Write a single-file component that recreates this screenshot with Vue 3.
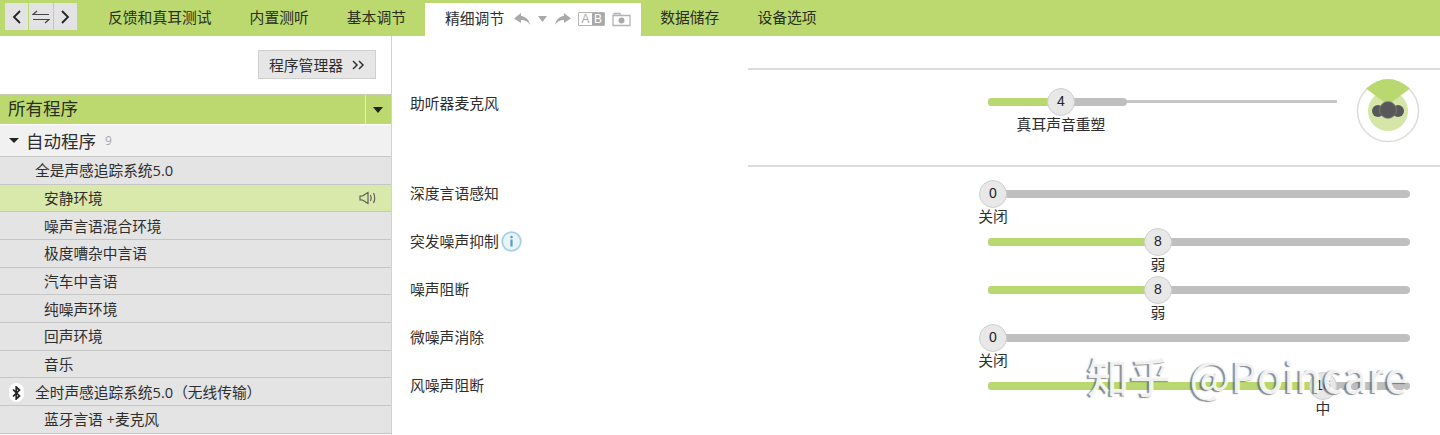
<template>
  <div class="app">
    <nav class="topbar">
      <div class="history">
        <button type="button" class="history__btn">
          <svg width="12" height="16" viewBox="0 0 12 16"><path d="M9 2 3 8l6 6" class="stroke-dark" /></svg>
        </button>
        <button type="button" class="history__btn">
          <svg width="18" height="14" viewBox="0 0 18 14"><path d="M5 1 1 4.500h16M13 13l4-3.500H1" class="stroke-thin" /></svg>
        </button>
        <button type="button" class="history__btn">
          <svg width="12" height="16" viewBox="0 0 12 16"><path d="m3 2 6 6-6 6" class="stroke-dark" /></svg>
        </button>
      </div>
      <a class="tab">反馈和真耳测试</a>
      <a class="tab">内置测听</a>
      <a class="tab">基本调节</a>
      <div class="tab tab--active">
        <span>精细调节</span>
        <div class="tools">
          <svg width="17" height="14" viewBox="0 0 17 14"><path d="M7 1 0 6.500 7 11V8c4 0 7 1.500 9 5-1-5-4-8.500-9-9z" fill="#a9a9a9" /></svg>
          <svg width="9" height="6" viewBox="0 0 9 6"><path d="M0 0h9L4.500 6z" fill="#a9a9a9" /></svg>
          <svg width="17" height="14" viewBox="0 0 17 14"><path d="m10 1 7 5.500L10 11V8c-4 0-7 1.500-9 5 1-5 4-8.500 9-9z" fill="#a9a9a9" /></svg>
          <span class="tools__ab"><i>A</i><b>B</b></span>
          <svg width="19" height="15" viewBox="0 0 19 15">
            <path d="M1 3.500h17v10H1zM2 3.500V1.500h6v2" fill="none" stroke="#b4b4b4" stroke-width="1.300" />
            <circle cx="9.500" cy="8.500" r="3" fill="#a9a9a9" />
          </svg>
        </div>
      </div>
      <a class="tab">数据储存</a>
      <a class="tab">设备选项</a>
    </nav>

    <div class="main">
      <aside class="sidebar">
        <div class="sidebar__top">
          <button type="button" class="manager-btn">
            <span>程序管理器</span>
            <svg width="13" height="10" viewBox="0 0 13 10"><path d="m1 1 4 4-4 4M7 1l4 4-4 4" fill="none" stroke="#333" stroke-width="1.500" /></svg>
          </button>
        </div>
        <div class="select">
          <span class="select__text">所有程序</span>
          <span class="select__arrow"></span>
        </div>
        <div class="group">
          <span class="group__arrow"></span>
          <span class="group__title">自动程序</span>
          <span class="group__count">9</span>
        </div>
        <div
          v-for="item in programs"
          :key="item.name"
          class="program"
          :class="{ 'program--sub': item.sub, 'program--active': item.active }"
        >
          <span v-if="item.bt" class="program__bt">
            <svg width="9" height="14" viewBox="0 0 9 14"><path d="M1 3.500 7.500 10 4.200 13V1l3.300 3L1 10.500" fill="none" stroke="#222" stroke-width="1.700" /></svg>
          </span>
          <span>{{ item.name }}</span>
          <svg v-if="item.active" class="program__sound" width="18" height="14" viewBox="0 0 18 14">
            <path d="M1 5v4h2.500L9 12.500v-11L3.500 5z" fill="none" stroke="#555" stroke-width="1.100" />
            <path d="M11.500 4q1.500 3 0 6M14.500 2q2.500 5 0 10" fill="none" stroke="#555" stroke-width="1.100" />
          </svg>
        </div>
      </aside>

      <section class="content">
        <hr class="divider" />
        <div class="mic">
          <span class="mic__label">助听器麦克风</span>
          <div class="mic__slider">
            <div class="slider__line"></div>
            <div class="slider__track mic__track">
              <div class="slider__fill" style="width: 73px"></div>
            </div>
            <div class="slider__thumb" style="left: 73px">4</div>
            <div class="slider__caption" style="left: 73px">真耳声音重塑</div>
          </div>
          <svg class="mic__polar" width="66" height="66" viewBox="0 0 66 66">
            <circle cx="33" cy="34" r="30.500" fill="#fff" stroke="#dcdcdc" stroke-width="1.500" />
            <circle cx="33" cy="34" r="20" fill="#d6e6a8" />
            <path d="M33 28 11 11.500Q33-7.500 55 11.500z" fill="#b9d86f" />
            <circle cx="23" cy="34" r="6" fill="#57575a" />
            <circle cx="43" cy="34" r="6" fill="#57575a" />
            <circle cx="33" cy="33" r="8.500" fill="#57575a" stroke="#8a8a8a" stroke-width=".6" />
          </svg>
        </div>
        <hr class="divider" />
        <div class="rows">
          <div v-for="row in rows" :key="row.label" class="row">
            <div class="row__label">
              <span>{{ row.label }}</span>
              <svg v-if="row.info" width="21" height="21" viewBox="0 0 21 21">
                <circle cx="10.500" cy="10.500" r="9.300" fill="#e9f3fa" stroke="#a9cfe6" stroke-width="1.800" />
                <circle cx="10.500" cy="6" r="1.300" fill="#5b9ac4" />
                <path d="M10.500 8.500v7" stroke="#5b9ac4" stroke-width="2.200" />
              </svg>
            </div>
            <div class="slider">
              <div class="slider__track">
                <div class="slider__fill" :style="{ width: thumbX(row.value) + 'px' }"></div>
              </div>
              <div class="slider__thumb" :style="{ left: thumbX(row.value) + 'px' }">{{ row.value }}</div>
              <div class="slider__caption" :style="{ left: thumbX(row.value) + 'px' }">{{ row.caption }}</div>
            </div>
          </div>
        </div>
      </section>
    </div>

    <div class="watermark">知乎 @Poincare</div>
  </div>
</template>

<script setup>
 const programs = [
   { name: '全是声感追踪系统5.0', sub: true },
   { name: '安静环境', active: true },
   { name: '噪声言语混合环境' },
   { name: '极度嘈杂中言语' },
   { name: '汽车中言语' },
   { name: '纯噪声环境' },
   { name: '回声环境' },
   { name: '音乐' },
   { name: '全时声感追踪系统5.0（无线传输）', sub: true, bt: true },
   { name: '蓝牙言语 +麦克风' }
 ]

 const rows = [
   { label: '深度言语感知', value: 0, caption: '关闭' },
   { label: '突发噪声抑制', value: 8, caption: '弱', info: true },
   { label: '噪声阻断', value: 8, caption: '弱' },
   { label: '微噪声消除', value: 0, caption: '关闭' },
   { label: '风噪声阻断', value: 16, caption: '中' }
 ]

 function thumbX(value) {
   return 5 + value * 20.625
 }
</script>

<style scoped>
.app {
  position: relative;
  display: flex;
  flex-direction: column;
  width: 1440px;
  height: 435px;
  overflow: hidden;
  background: #fff;
  color: #2e2e2e;
  font-family: "Open Sans", "Noto Sans CJK SC", sans-serif;
  font-size: 14.800px;
  line-height: 20px;
}

.stroke-dark {
  fill: none;
  stroke: #222;
  stroke-width: 1.800;
}

.stroke-thin {
  fill: none;
  stroke: #444;
  stroke-width: 1.200;
}

.topbar {
  display: flex;
  flex: none;
  height: 36px;
  background: #bcd970;
}

.history {
  display: flex;
  gap: 1px;
  height: 27px;
  margin: 3px 12px 0 5px;
}

.history__btn {
  display: flex;
  align-items: center;
  justify-content: center;
  width: 23.330px;
  padding: 0;
  border: none;
  background: #e3e3e3;
}

.tab {
  display: flex;
  align-items: center;
  padding: 0 19px 2px;
  color: #2a2e1c;
}

.tab--active {
  gap: 10px;
  height: 33px;
  margin: 3px 0 0;
  padding: 0 10px 0 20px;
  box-sizing: border-box;
  background: #fff;
  color: #2e2e2e;
}

.tab--active > span {
  margin-bottom: 3px;
}

.tools {
  display: flex;
  align-items: center;
  gap: 7px;
  margin-bottom: 1px;
}

.tools__ab {
  display: flex;
  width: 27px;
  height: 14px;
  border: 1px solid #b4b4b4;
  box-sizing: border-box;
  border-radius: 1px;
  font-family: "Liberation Sans", sans-serif;
  font-size: 12px;
  line-height: 12px;
  text-align: center;
}

.tools__ab i {
  flex: 1;
  color: #a9a9a9;
  font-style: normal;
}

.tools__ab b {
  flex: 1;
  background: #a9a9a9;
  color: #fff;
  font-weight: 400;
}

.main {
  display: flex;
  flex: 1;
  min-height: 0;
}

.sidebar {
  flex: none;
  width: 392px;
  box-sizing: border-box;
  border-right: 1px solid #d2d2d2;
}

.sidebar__top {
  display: flex;
  justify-content: flex-end;
  height: 58px;
  padding: 14px 15px 0 0;
  box-sizing: border-box;
}

.manager-btn {
  display: flex;
  align-items: center;
  justify-content: center;
  gap: 9px;
  width: 118px;
  height: 29px;
  padding: 0;
  border: 1px solid #d0d0d0;
  background: #e6e6e6;
  color: #2e2e2e;
  font: inherit;
}

.select {
  display: flex;
  align-items: center;
  justify-content: space-between;
  height: 30px;
  background: #bcd970;
  border-top: 1px solid #c9c9b4;
  box-sizing: border-box;
}

.select__text {
  margin-bottom: 4px;
  padding-left: 8px;
  font-size: 17.500px;
  color: #2a2e1c;
}

.select__arrow {
  position: relative;
  width: 25px;
  height: 100%;
  border-left: 1px solid #e4efc4;
}

.select__arrow::after {
  content: '';
  position: absolute;
  left: 7px;
  top: 12px;
  border: 5px solid transparent;
  border-top: 6px solid #222;
  border-bottom: 0;
}

.group {
  display: flex;
  align-items: center;
  height: 32px;
  margin-top: 1px;
  background: #f1f1f1;
  border-bottom: 1px solid #c9c9c9;
  box-sizing: border-box;
}

.group__arrow {
  margin-left: 9px;
  border: 5px solid transparent;
  border-top: 5px solid #222;
  border-bottom: 0;
}

.group__title {
  margin-left: 7px;
  font-size: 17.500px;
}

.group__count {
  margin-left: 9px;
  color: #aaa;
  font-size: 12px;
}

.program {
  display: flex;
  align-items: center;
  height: 27.670px;
  padding-left: 44px;
  box-sizing: border-box;
  background: #e4e4e4;
  border-bottom: 1px solid #c6c6c6;
  font-size: 14.700px;
}

.program--sub {
  position: relative;
  padding-left: 35px;
}

.program--active {
  background: #d9e8ab;
  justify-content: space-between;
  padding-right: 14px;
}

.program__sound {
  flex: none;
}

.program__bt {
  position: absolute;
  left: 9px;
  top: 5px;
  display: flex;
  align-items: center;
  justify-content: center;
  width: 15px;
  height: 19px;
  border-radius: 8px;
  background: #fff;
}

.content {
  flex: 1;
  min-width: 0;
  padding-left: 18px;
}

.divider {
  height: 2px;
  margin: 0 0 0 338px;
  border: none;
  background: #dcdcdc;
}

.content > .divider:first-child {
  margin-top: 32px;
}

.mic {
  display: flex;
  height: 95px;
}

.mic__label {
  width: 578px;
  margin-top: 23px;
}

.mic__slider {
  position: relative;
  flex: none;
  width: 349px;
  height: 28px;
  margin-top: 18px;
}

.slider__line {
  position: absolute;
  left: 0;
  right: 0;
  top: 12px;
  height: 3px;
  background: #c6c6c6;
}

.mic__track {
  width: 139px;
}

.mic__polar {
  flex: none;
  margin: 7px 0 0 18px;
}

.rows {
  margin-top: 13px;
}

.row {
  display: flex;
  height: 48px;
}

.row__label {
  display: flex;
  align-items: center;
  gap: 2px;
  width: 578px;
  height: 26px;
  flex: none;
}

.slider {
  position: relative;
  width: 422px;
  height: 28px;
}

.slider__track {
  position: absolute;
  left: 0;
  top: 10px;
  width: 100%;
  height: 8px;
  border-radius: 4px;
  background: #bfbfbf;
  overflow: hidden;
}

.mic__slider .slider__track {
  width: 139px;
}

.slider__fill {
  height: 100%;
  background: #b9d86f;
}

.slider__thumb {
  position: absolute;
  top: 0;
  width: 28px;
  height: 28px;
  margin-left: -14px;
  box-sizing: border-box;
  border: 1.500px solid #cfcfcf;
  border-radius: 50%;
  background: #e8e8e8;
  font-family: "Liberation Sans", sans-serif;
  font-size: 14px;
  line-height: 25px;
  text-align: center;
  color: #222;
}

.slider__caption {
  position: absolute;
  top: 28px;
  line-height: 16px;
  transform: translateX(-50%);
  white-space: nowrap;
}

.watermark {
  position: absolute;
  left: 1087px;
  top: 345px;
  color: rgba(255, 255, 255, 0.88);
  font-family: "Noto Sans CJK SC", sans-serif;
  font-size: 42.500px;
  font-weight: 500;
  line-height: 60px;
  word-spacing: 8px;
  white-space: nowrap;
  text-shadow: -2px 1px 1px rgba(90, 90, 90, 0.7);
}
</style>

<style>
html,
body {
  margin: 0;
  overflow: hidden;
}
</style>
